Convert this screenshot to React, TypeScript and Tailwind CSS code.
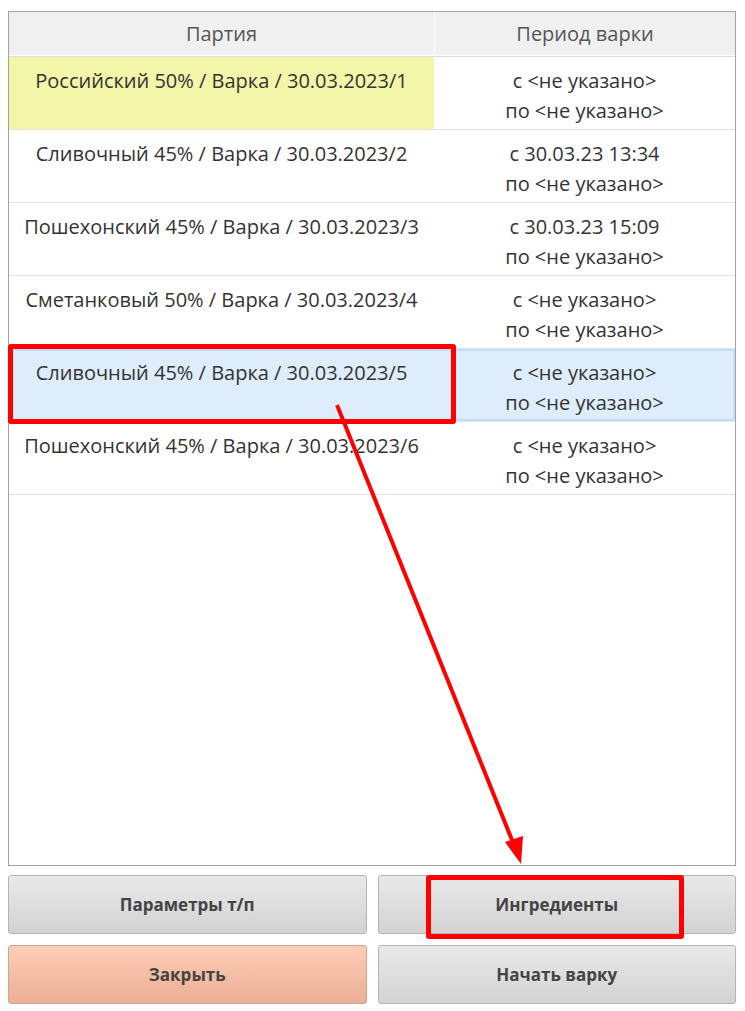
import React from "react";

type Row = { name: string; from: string; to: string; kind?: "yellow" | "selected" };

const rows: Row[] = [
  { name: "Российский 50% / Варка / 30.03.2023/1", from: "с <не указано>", to: "по <не указано>", kind: "yellow" },
  { name: "Сливочный 45% / Варка / 30.03.2023/2", from: "с 30.03.23 13:34", to: "по <не указано>" },
  { name: "Пошехонский 45% / Варка / 30.03.2023/3", from: "с 30.03.23 15:09", to: "по <не указано>" },
  { name: "Сметанковый 50% / Варка / 30.03.2023/4", from: "с <не указано>", to: "по <не указано>" },
  { name: "Сливочный 45% / Варка / 30.03.2023/5", from: "с <не указано>", to: "по <не указано>", kind: "selected" },
  { name: "Пошехонский 45% / Варка / 30.03.2023/6", from: "с <не указано>", to: "по <не указано>" },
];

const ActionButton = ({ label, danger }: { label: string; danger?: boolean }) => (
  <button
    className={
      "h-[59px] rounded-[3px] border text-[17px] font-bold text-[#444] " +
      (danger
        ? "border-[#c9a696] bg-gradient-to-b from-[#ffcdb6] to-[#ebae95]"
        : "border-[#b3b3b3] bg-gradient-to-b from-[#e9e9e9] to-[#d3d3d3]")
    }
  >
    {label}
  </button>
);

export default function App() {
  return (
    <div
      className="relative h-[1011px] w-[745px] bg-white px-[8px] pt-[11px]"
      style={{ fontFamily: '"Open Sans", "Noto Sans", sans-serif' }}
    >
      {/* table */}
      <div className="flex h-[855px] w-[728px] flex-col border border-[#a3a3a3] bg-white">
        <div className="grid h-[45px] grid-cols-[425px_1fr] gap-x-px border-b border-[#dcdcdc] bg-white pb-px">
          <div className="flex items-center justify-center bg-[#f0f0f0] pt-px text-[20px] text-[#555]">Партия</div>
          <div className="flex items-center justify-center bg-[#f0f0f0] pt-px text-[20px] text-[#555]">Период варки</div>
        </div>
        {rows.map((r) => (
          <div
            key={r.name}
            className={
              "grid h-[73px] grid-cols-[425px_1fr] border-b border-[#e3e3e3] text-[20px] leading-[30px] text-[#333] " +
              (r.kind === "selected" ? "bg-[#ddedfb] shadow-[inset_0_0_0_2px_#c2ddf5]" : "")
            }
          >
            <div className={"pt-[9px] text-center " + (r.kind === "yellow" ? "bg-[#f3f5a8]" : "")}>{r.name}</div>
            <div className="pt-[9px] text-center">
              <div>{r.from}</div>
              <div>{r.to}</div>
            </div>
          </div>
        ))}
      </div>

      {/* buttons */}
      <div className="mt-[9px] grid w-[728px] grid-cols-2 gap-[11px]">
        <ActionButton label="Параметры т/п" />
        <ActionButton label="Ингредиенты" />
        <ActionButton label="Закрыть" danger />
        <ActionButton label="Начать варку" />
      </div>

      {/* annotations */}
      <div className="absolute left-[8px] top-[344px] h-[80px] w-[448px] rounded-[3px] border-[5px] border-[#ff0000]" />
      <div className="absolute left-[426px] top-[875px] h-[64px] w-[258px] rounded-[3px] border-[5px] border-[#ff0000]" />
      <svg className="pointer-events-none absolute left-0 top-0" width="745" height="1011">
        <line x1="337" y1="405" x2="514" y2="845" stroke="#ff0000" strokeWidth="4" />
        <polygon points="521,864 505,842 523,836" fill="#ff0000" />
      </svg>
    </div>
  );
}
